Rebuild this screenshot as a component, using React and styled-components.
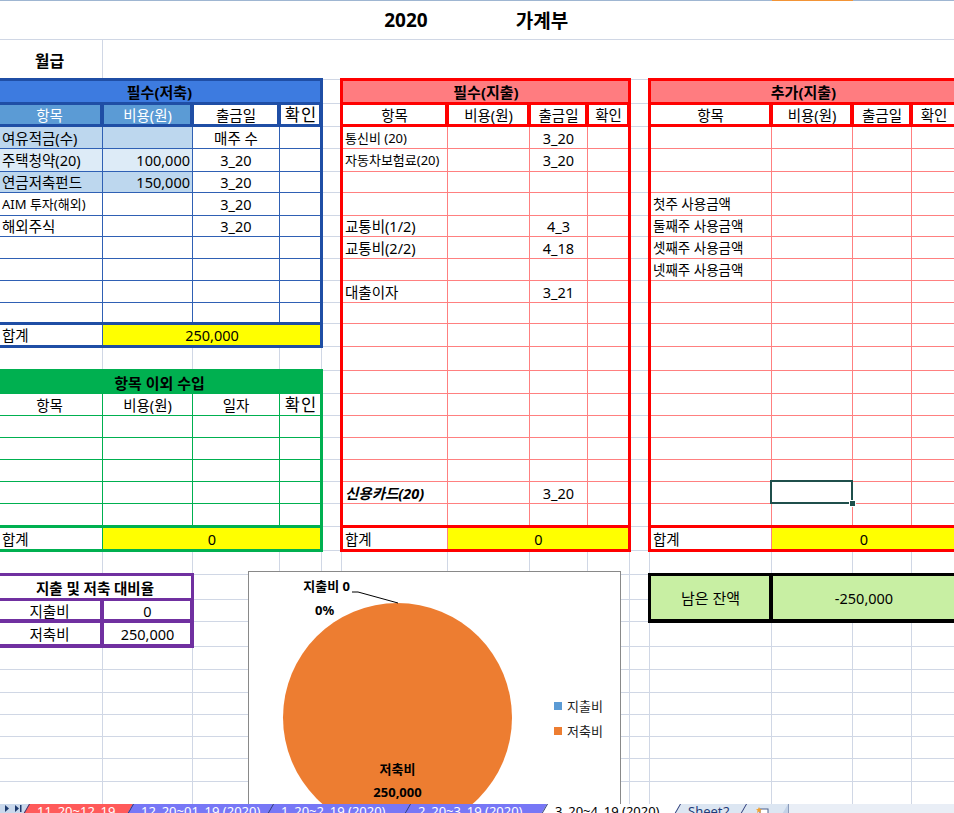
import React from 'react';
import styled, { createGlobalStyle, css } from 'styled-components';

const FONT = `"Noto Sans", "Noto Sans CJK KR", sans-serif`;
const GRID = '#d0d7e5';

const BLUE_EDGE = '#1f4ea5';
const BLUE_LINE = '#2f60b4';
const GREEN = '#00b050';
const RED = '#ff0000';
const RED_LINE = '#ff8080';
const SALMON = '#ff7c80';
const PURPLE = '#7030a0';
const YELLOW = '#ffff00';
const SKY = '#bdd7ee';
const PALE = '#ddebf7';

// sheet columns A..N (sheet starts 3px left of the window) and row heights
const COLS = [106, 90, 87, 42, 20, 106, 82, 58, 42, 20, 122, 81, 59, 45];
const ROWS = [
  39, 40, 24, 23,
  22, 23, 21, 23, 21, 22, 22, 22, 21, 23, 24, 23, 22, 22, 22, 22, 22, 23,
  24, 24, 25, 22, 25, 23, 23, 22, 22, 22, 23, 23,
];
const px = (list) => list.map((v) => `${v}px`).join(' ');

const GlobalStyle = createGlobalStyle`
  html, body { margin: 0; padding: 0; background: #fff; overflow: hidden; }
  body { font-family: ${FONT}; color: #000; }
`;

const Frame = styled.div`
  width: 954px;
  height: 813px;
  overflow: hidden;
  display: flex;
  flex-direction: column;
`;

const HeaderEdge = styled.div`
  flex: none;
  height: 1px;
  margin-left: -3px;
  display: grid;
  grid-template-columns: ${px(COLS)};
`;

const EdgeSeg = styled.div`
  background: ${(p) => (p.$on ? '#f29436' : '#9fb6d2')};
`;

const Sheet = styled.div`
  position: relative;
  flex: none;
  width: 960px;
  height: 803px;
  margin-left: -3px;
  overflow: hidden;
  display: grid;
  grid-template-columns: ${px(COLS)};
  grid-template-rows: ${px(ROWS)};
`;

const Backdrop = styled.div`
  grid-column: 1 / -1;
  grid-row: 1 / -1;
  display: grid;
  grid-template-columns: subgrid;
  grid-template-rows: subgrid;
`;

const TitleBar = styled.div`
  grid-column: 1 / -1;
  display: flex;
  align-items: center;
  padding-left: 343px;
  border-bottom: 1px solid ${GRID};
`;

const TitleWord = styled.span`
  width: ${(p) => p.$w}px;
  text-align: center;
  font-size: 19px;
  font-weight: 700;
`;

const SalaryCell = styled.div`
  display: flex;
  align-items: center;
  justify-content: center;
  font-size: 16px;
  font-weight: 700;
  border-right: 1px solid ${GRID};
  border-bottom: 1px solid ${GRID};
`;

const SalaryRest = styled.div`
  grid-column: span 13;
  border-bottom: 1px solid ${GRID};
`;

const GridCell = styled.div`
  border-right: 1px solid ${GRID};
  border-bottom: 1px solid ${GRID};
`;

const Block = styled.div`
  grid-column: ${(p) => p.$cols};
  grid-row: ${(p) => p.$rows};
  display: grid;
  grid-template-columns: subgrid;
  grid-template-rows: subgrid;
  position: relative;
  --lead: ${(p) => p.$lead || 3}px;

  &::after {
    content: '';
    position: absolute;
    inset: -2px -1px -1px -2px;
    border: 3px solid ${(p) => p.$edge};
    z-index: 2;
    pointer-events: none;
  }
`;

const boxRule = (c) => css`
  &::after {
    content: '';
    position: absolute;
    inset: -2px -1px -1px -2px;
    border: 3px solid ${c};
    z-index: 1;
    pointer-events: none;
  }
`;

const topRule = (c) => css`
  &::after {
    content: '';
    position: absolute;
    left: -2px;
    right: -1px;
    top: -2px;
    height: 3px;
    background: ${c};
    z-index: 1;
  }
`;

const pickedRule = css`
  &::after {
    content: '';
    position: absolute;
    inset: -2px -1px -1px -2px;
    border: 2px solid #1f4f4b;
    z-index: 3;
  }
  &::before {
    content: '';
    position: absolute;
    right: -4px;
    bottom: -4px;
    width: 5px;
    height: 5px;
    background: #1f4f4b;
    border: 1px solid #fff;
    z-index: 4;
  }
`;

const JUSTIFY = { left: 'flex-start', center: 'center', right: 'flex-end' };
const PADDING = { left: '0 0 0 var(--lead, 3px)', center: '0', right: '0 2px 0 0' };

const Cell = styled.div`
  position: relative;
  grid-column: span ${(p) => p.$span || 1};
  grid-row: span ${(p) => p.$tall || 1};
  display: flex;
  align-items: center;
  justify-content: ${(p) => JUSTIFY[p.$align || 'left']};
  padding: ${(p) => (p.$spread ? '0 0 0 1px' : PADDING[p.$align || 'left'])};
  white-space: nowrap;
  background: ${(p) => p.$bg || '#fff'};
  color: ${(p) => p.$fg || '#000'};
  border-right: 1px solid ${(p) => p.$line || 'transparent'};
  border-bottom: 1px solid ${(p) => p.$line || 'transparent'};
  font-size: ${(p) => p.$size || 14.5}px;
  font-weight: ${(p) => (p.$bold ? 700 : 400)};
  font-style: ${(p) => (p.$italic ? 'italic' : 'normal')};
  letter-spacing: ${(p) => (p.$spread ? '1px' : 'normal')};
  line-height: 16px;
  ${(p) => p.$box && boxRule(p.$box)}
  ${(p) => p.$rule && topRule(p.$rule)}
  ${(p) => p.$picked && pickedRule}
`;

const Banner = styled(Cell)`
  grid-column: 1 / -1;
  justify-content: center;
  padding: 0;
  border: none;
  font-size: ${(p) => p.$size || 15}px;
  font-weight: 700;
`;

const ChartBox = styled.div`
  position: absolute;
  left: 251px;
  top: 570px;
  width: 371px;
  height: 260px;
  border: 1px solid #898989;
  background: #fff;
  z-index: 5;
`;

const ChartArt = styled.svg`
  display: block;
  font-family: ${FONT};
`;

const TabBar = styled.div`
  flex: none;
  height: 9px;
  display: flex;
  overflow: hidden;
  background: #c3d2e7;
  font-family: "Noto Sans", sans-serif;
  font-size: 13px;
`;

const TabNav = styled.div`
  flex: none;
  width: 29px;
  display: flex;
  align-items: flex-start;
  background: #c9d8ec;
`;

const Tab = styled.div`
  position: relative;
  isolation: isolate;
  flex: none;
  box-sizing: border-box;
  width: ${(p) => p.$w}px;
  padding-left: ${(p) => p.$pad || 8}px;
  line-height: 14px;
  color: ${(p) => p.$fg || '#fff'};
  white-space: nowrap;

  &::before {
    content: '';
    position: absolute;
    inset: 0;
    background: ${(p) => p.$bg};
    border-left: 1px solid #2c3a78;
    transform: skewX(-30deg);
    transform-origin: top left;
    z-index: -1;
  }
`;

const TabFill = styled.div`
  flex: 1;
  background: #e9eef6;
  border-left: 1px solid #8a9bbb;
`;

const date = (t) => ({ t, a: 'center' });
const blank = (n) => Array.from({ length: n }, () => [{}, {}, {}, {}]);

const savings = [
  [{ t: '여유적금(수)', bg: SKY }, { bg: SKY }, date('매주 수'), {}],
  [{ t: '주택청약(20)', bg: PALE }, { t: '100,000', a: 'right', bg: PALE }, date('3_20'), {}],
  [{ t: '연금저축펀드', bg: SKY }, { t: '150,000', a: 'right', bg: SKY }, date('3_20'), {}],
  [{ t: 'AIM 투자(해외)', size: 13 }, {}, date('3_20'), {}],
  [{ t: '해외주식' }, {}, date('3_20'), {}],
  ...blank(4),
];

const fixedCosts = [
  [{ t: '통신비 (20)', size: 13 }, {}, date('3_20'), {}],
  [{ t: '자동차보험료(20)', size: 13 }, {}, date('3_20'), {}],
  ...blank(2),
  [{ t: '교통비(1/2)' }, {}, date('4_3'), {}],
  [{ t: '교통비(2/2)' }, {}, date('4_18'), {}],
  ...blank(1),
  [{ t: '대출이자' }, {}, date('3_21'), {}],
  ...blank(8),
  [{ t: '신용카드(20)', bold: true, italic: true }, {}, date('3_20'), {}],
  ...blank(1),
];

const extraCosts = [
  ...blank(3),
  [{ t: '첫주 사용금액', size: 13.5 }, {}, {}, {}],
  [{ t: '둘째주 사용금액', size: 13.5 }, {}, {}, {}],
  [{ t: '셋째주 사용금액', size: 13.5 }, {}, {}, {}],
  [{ t: '넷째주 사용금액', size: 13.5 }, {}, {}, {}],
  ...blank(9),
  [{}, { picked: true }, {}, {}],
  ...blank(1),
];

function BodyRows({ rows, line }) {
  return rows.flatMap((row, i) =>
    row.map((c, j) => (
      <Cell
        key={`${i}-${j}`}
        $line={line}
        $bg={c.bg}
        $align={c.a}
        $size={c.size}
        $bold={c.bold}
        $italic={c.italic}
        $picked={c.picked}
      >
        {c.t}
      </Cell>
    ))
  );
}

function SumRow({ line, edge, value }) {
  return (
    <>
      <Cell $line={line} $rule={edge}>합계</Cell>
      <Cell $line={line} $rule={edge} $span={3} $bg={YELLOW} $align="center">
        {value}
      </Cell>
    </>
  );
}

function OutflowTable({ cols, title, rows }) {
  const heads = ['항목', '비용(원)', '출금일', '확인'];
  return (
    <Block $cols={cols} $rows="3 / 24" $edge={RED}>
      <Banner $bg={SALMON}>{title}</Banner>
      {heads.map((h) => (
        <Cell key={h} $box={RED} $align="center">{h}</Cell>
      ))}
      <BodyRows rows={rows} line={RED_LINE} />
      <SumRow line={RED_LINE} edge={RED} value="0" />
    </Block>
  );
}

function PieChart() {
  return (
    <ChartBox>
      <ChartArt width="371" height="260" viewBox="0 0 371 260">
        <circle cx="148.5" cy="145.5" r="114.5" fill="#ed7d31" />
        <polyline points="103,20 109,20 149,31" fill="none" stroke="#000" strokeWidth="1" />
        <text x="101" y="19" textAnchor="end" fontSize="13" fontWeight="700">지출비 0</text>
        <text x="66" y="43" fontSize="13" fontWeight="700">0%</text>
        <text x="148.5" y="202" textAnchor="middle" fontSize="13" fontWeight="700">저축비</text>
        <text x="148.5" y="225" textAnchor="middle" fontSize="13" fontWeight="700">250,000</text>
        <rect x="305" y="130" width="8" height="8" fill="#5b9bd5" />
        <text x="318" y="139" fontSize="13" fill="#222">지출비</text>
        <rect x="305" y="155" width="8" height="8" fill="#ed7d31" />
        <text x="318" y="164" fontSize="13" fill="#222">저축비</text>
      </ChartArt>
    </ChartBox>
  );
}

export default function App() {
  return (
    <>
      <GlobalStyle />
      <Frame>
        <HeaderEdge>
          {COLS.map((w, i) => (
            <EdgeSeg key={i} $on={i === 11} />
          ))}
        </HeaderEdge>

        <Sheet>
          <Backdrop>
            <TitleBar>
              <TitleWord $w={132}>2020</TitleWord>
              <TitleWord $w={140}>가계부</TitleWord>
            </TitleBar>
            <SalaryCell>월급</SalaryCell>
            <SalaryRest />
            {Array.from({ length: 32 * 14 }, (_, i) => (
              <GridCell key={i} />
            ))}
          </Backdrop>

          <Block $cols="1 / 5" $rows="3 / 15" $edge={BLUE_EDGE} $lead={5}>
            <Banner $bg="#3d7be0">필수(저축)</Banner>
            <Cell $box={BLUE_EDGE} $bg="#5b9bd5" $fg="#fff" $align="center">항목</Cell>
            <Cell $box={BLUE_EDGE} $bg="#5b9bd5" $fg="#fff" $align="center">비용(원)</Cell>
            <Cell $box={BLUE_EDGE} $align="center">출금일</Cell>
            <Cell $box={BLUE_EDGE} $align="center" $size={16.5} $spread>확인</Cell>
            <BodyRows rows={savings} line={BLUE_LINE} />
            <SumRow line={BLUE_LINE} edge={BLUE_EDGE} value="250,000" />
          </Block>

          <Block $cols="1 / 5" $rows="16 / 24" $edge={GREEN} $lead={5}>
            <Banner $bg={GREEN}>항목 이외 수입</Banner>
            <Cell $line={GREEN} $align="center">항목</Cell>
            <Cell $line={GREEN} $align="center">비용(원)</Cell>
            <Cell $line={GREEN} $align="center">일자</Cell>
            <Cell $line={GREEN} $align="center" $size={16.5} $spread>확인</Cell>
            <BodyRows rows={blank(5)} line={GREEN} />
            <SumRow line={GREEN} edge={GREEN} value="0" />
          </Block>

          <OutflowTable cols="6 / 10" title="필수(지출)" rows={fixedCosts} />
          <OutflowTable cols="11 / 15" title="추가(지출)" rows={extraCosts} />

          <Block $cols="1 / 3" $rows="25 / 28" $edge={PURPLE} $lead={5}>
            <Banner $box={PURPLE} $size={14.5}>지출 및 저축 대비율</Banner>
            <Cell $box={PURPLE} $align="center">지출비</Cell>
            <Cell $box={PURPLE} $align="center">0</Cell>
            <Cell $box={PURPLE} $align="center">저축비</Cell>
            <Cell $box={PURPLE} $align="center">250,000</Cell>
          </Block>

          <Block $cols="11 / 15" $rows="25 / 27" $edge="#000">
            <Cell $box="#000" $bg="#c8efa3" $tall={2} $align="center" $size={15}>남은 잔액</Cell>
            <Cell $box="#000" $bg="#c8efa3" $tall={2} $span={3} $align="center">-250,000</Cell>
          </Block>

          <PieChart />
        </Sheet>

        <TabBar>
          <TabNav>
            <svg width="29" height="9" viewBox="0 0 29 9">
              <path d="M5 1 L9 4.5 L5 8 Z" fill="#1e3a6e" />
              <path d="M15 1 L19 4.5 L15 8 Z M20 1 H21.5 V8 H20 Z" fill="#1e3a6e" />
            </svg>
          </TabNav>
          <Tab $w={104} $bg="#ff5a5a">11_20~12_19</Tab>
          <Tab $w={140} $bg="#7777f6">12_20~01_19 (2020)</Tab>
          <Tab $w={137} $bg="#7777f6">1_20~2_19 (2020)</Tab>
          <Tab $w={137} $bg="#7777f6">2_20~3_19 (2020)</Tab>
          <Tab $w={133} $bg="#ffffff" $fg="#000">3_20~4_19 (2020)</Tab>
          <Tab $w={66} $bg="#dce6f2" $fg="#1f3b78">Sheet2</Tab>
          <Tab $w={42} $bg="#dce6f2" $pad={10}>
            <svg width="14" height="9" viewBox="0 0 14 9">
              <rect x="4" y="2" width="8" height="9" fill="#fff" stroke="#4a5f8a" />
              <path d="M3 0 L4 2 L6 2.3 L4.4 3.6 L5 6 L3 4.6 L1 6 L1.6 3.6 L0 2.3 L2 2 Z" fill="#f0a030" />
            </svg>
          </Tab>
          <TabFill />
        </TabBar>
      </Frame>
    </>
  );
}
